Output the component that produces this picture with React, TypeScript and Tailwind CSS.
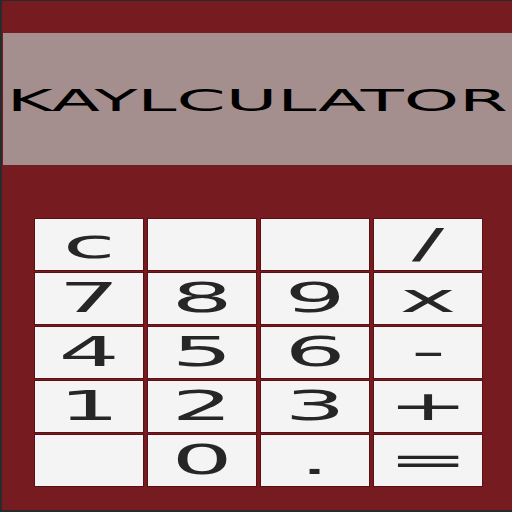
const KEYS = [
  'c', '', '', '/',
  '7', '8', '9', 'x',
  '4', '5', '6', '-',
  '1', '2', '3', '+',
  '', '0', '.', '=',
]

function Key({ label }: { label: string }) {
  return (
    <button className="flex items-center justify-center bg-[#f4f4f4] shadow-[0_0_0_1px_#5c1014] text-[#262626]">
      <span className="inline-block scale-x-[2.35] text-[41px] leading-none">{label}</span>
    </button>
  )
}

export default function App() {
  return (
    <div
      className="w-[512px] h-[512px] overflow-hidden bg-[#761b20] border-l-2 border-t border-b-2 border-[#2a2a2a] flex flex-col"
      style={{ fontFamily: '"DejaVu Sans", sans-serif' }}
    >
      {/* Display */}
      <div className="mt-[32px] ml-px h-[132px] bg-[#a48e8e] flex items-center justify-center pt-[3px]">
        <span className="inline-block scale-x-[2.27] text-[31px] leading-none text-black whitespace-nowrap">
          KAYLCULATOR
        </span>
      </div>

      {/* Keypad */}
      <div className="mt-[54px] ml-[33px] w-[447px] grid grid-cols-4 grid-rows-5 gap-x-[5px] gap-y-[3px] h-[267px]">
        {KEYS.map((k, i) => (
          <Key key={i} label={k} />
        ))}
      </div>
    </div>
  )
}
